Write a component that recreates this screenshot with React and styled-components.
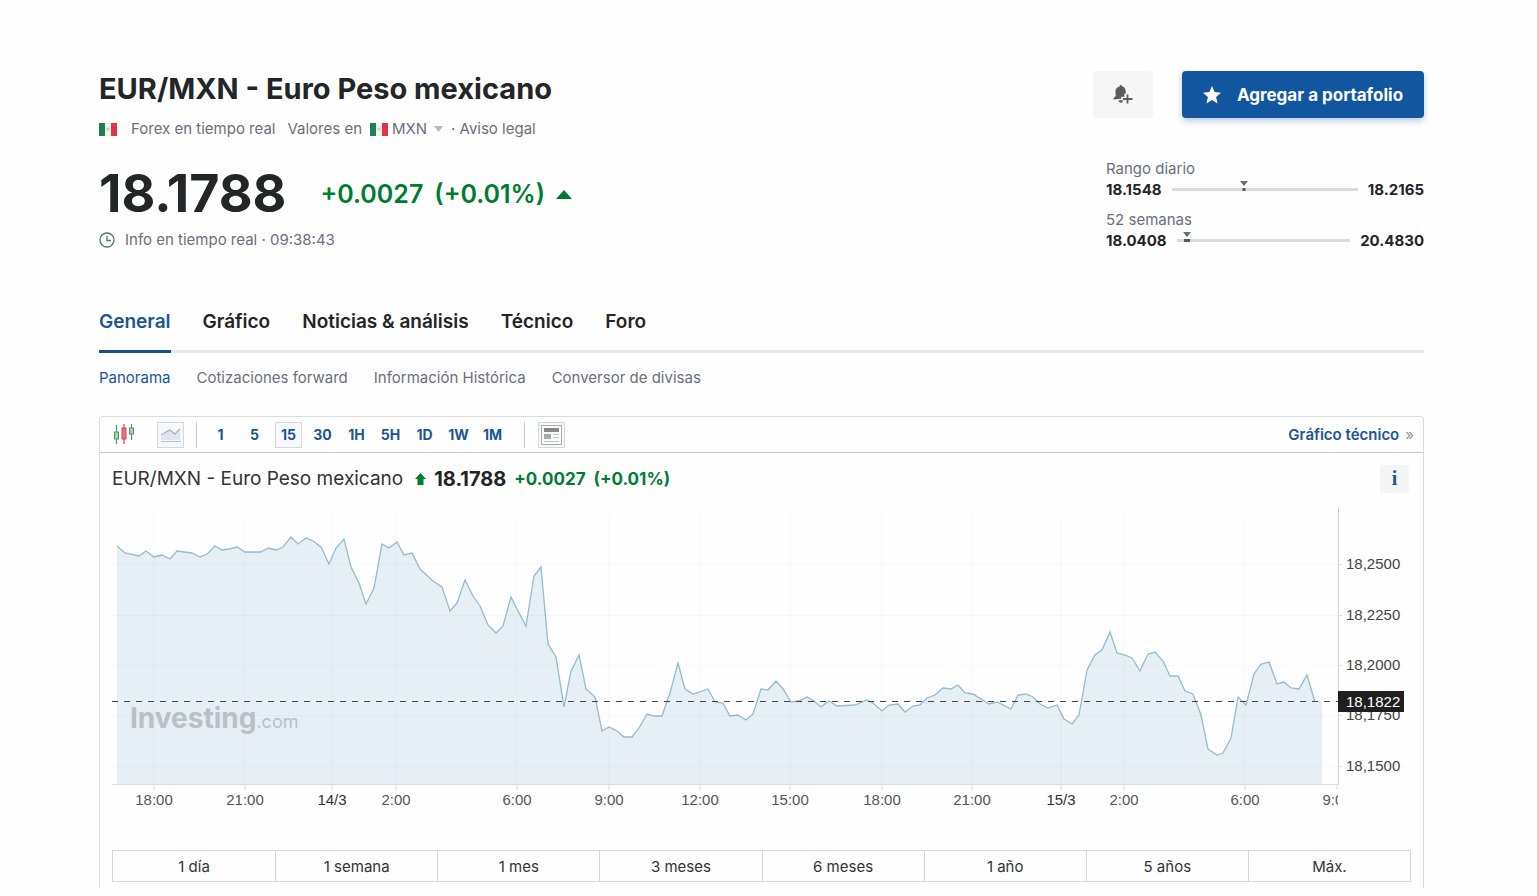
import React, { useState } from 'react';
import styled, { createGlobalStyle } from 'styled-components';

const GlobalStyle = createGlobalStyle`
  *{
    box-sizing: border-box;
  }
  body{
    margin: 0;
    background: #fefefe;
    color: #232526;
    font-family: Inter, "Liberation Sans", sans-serif;
  }
  button, select{
    font: inherit;
    color: inherit;
    border: 0;
    padding: 0;
    background: none;
    cursor: pointer;
  }
  a{
    color: inherit;
    text-decoration: none;
  }
  svg{
    display: block;
    flex: none;
  }
`;

const Page = styled.main`
  padding: 71px 113px 8px 99px;
`;

const Header = styled.header`
  display: flex;
  justify-content: space-between;
`;

const Title = styled.h1`
  margin: 0;
  font-size: 29px;
  line-height: 36px;
  font-weight: 700;
`;

const MetaRow = styled.div`
  display: flex;
  align-items: center;
  margin-top: 12px;
  font-size: 15px;
  line-height: 20px;
  color: #6a707c;
`;

const MetaText = styled.span`
  margin: 0 ${(props) => props.$right || 0}px 0 ${(props) => props.$left || 0}px;
`;

const Currency = styled.label`
  display: flex;
  align-items: center;

  select{
    appearance: none;
    margin: 0 6px 0 4px;
    line-height: 20px;
  }
`;

const PriceRow = styled.div`
  display: flex;
  align-items: center;
  margin-top: 27px;
  color: #007c32;
`;

const Price = styled.span`
  margin-right: 34px;
  color: #232526;
  font-size: 52px;
  line-height: 56px;
  font-weight: 700;
`;

const Change = styled.span`
  margin-right: 11px;
  font-size: 25px;
  line-height: 32px;
  font-weight: 600;
`;

const InfoRow = styled.div`
  display: flex;
  align-items: center;
  gap: 10px;
  margin-top: 8px;
  font-size: 15px;
  line-height: 20px;
  color: #6a707c;
`;

const Side = styled.div`
  display: flex;
  flex-direction: column;
  align-items: flex-end;
`;

const Actions = styled.div`
  display: flex;
  gap: 29px;
`;

const AlertButton = styled.button`
  display: flex;
  align-items: center;
  justify-content: center;
  width: 60px;
  height: 47px;
  border-radius: 4px;
  background: #f6f6f6;
`;

const PortfolioButton = styled.button`
  display: flex;
  align-items: center;
  justify-content: center;
  gap: 16px;
  width: 242px;
  height: 47px;
  border-radius: 4px;
  background: #1256a0;
  box-shadow: 0 3px 6px rgba(18, 86, 160, 0.3);
  color: #fff;
  font-size: 17px;
  font-weight: 700;
`;

const Ranges = styled.div`
  display: grid;
  gap: 9px;
  width: 318px;
  margin-top: 40px;
  font-size: 15px;
  line-height: 21px;
  color: #6a707c;
`;

const RangeRow = styled.div`
  display: flex;
  align-items: center;
  gap: 10px;
  color: #232526;
  font-weight: 700;
`;

const Track = styled.div`
  position: relative;
  flex: 1;
  height: 3px;
  background: #d9dcde;
`;

const Marker = styled.svg`
  position: absolute;
  top: -7px;
  margin-left: -4px;
`;

const Tabs = styled.nav`
  display: flex;
  gap: 32px;
  margin-top: 59px;
  box-shadow: inset 0 -3px #e6e7e8;
`;

const Tab = styled.a`
  padding-bottom: 16px;
  border-bottom: 3px solid ${(props) => (props.$active ? '#1a4f8b' : 'transparent')};
  color: ${(props) => (props.$active ? '#1c5595' : '#232526')};
  font-size: 19px;
  line-height: 24px;
  font-weight: 600;
`;

const SubTabs = styled.nav`
  display: flex;
  gap: 26px;
  margin-top: 15px;
`;

const SubTab = styled.a`
  color: ${(props) => (props.$active ? '#1c5595' : '#6a707c')};
  font-size: 15px;
  line-height: 20px;
`;

const Panel = styled.section`
  margin-top: 28px;
  padding-bottom: 6px;
  border: 1px solid #dadcdd;
  border-bottom: 0;
  border-radius: 4px 4px 0 0;
`;

const Toolbar = styled.div`
  display: flex;
  align-items: center;
  height: 36px;
  padding: 0 9px 0 13px;
  border-bottom: 1px solid #c6c8ca;
  color: #1c5595;
  font-size: 14px;
  font-weight: 700;
`;

const ToolButton = styled.button`
  display: flex;
  align-items: center;
  justify-content: center;
  width: 27px;
  height: 26px;
  border: 1px solid ${(props) => (props.$framed ? '#d5d8da' : 'transparent')};
  background: ${(props) => (props.$framed ? '#f7f8f9' : 'none')};
`;

const Divider = styled.span`
  width: 1px;
  height: 26px;
  margin: 0 ${(props) => props.$right}px 0 ${(props) => props.$left}px;
  background: #c6c8ca;
`;

const ChartTypes = styled.div`
  display: flex;
  align-items: center;
  gap: 22px;
`;

const Intervals = styled.div`
  display: flex;
  gap: 7px;
`;

const TechLink = styled.a`
  margin-left: auto;
  font-size: 15px;
  font-weight: 600;

  span{
    margin-left: 6px;
    color: #8d949b;
    font-weight: 400;
  }
`;

const ChartHead = styled.div`
  display: flex;
  align-items: center;
  height: 55px;
  padding: 0 14px 4px 12px;
`;

const ChartTitle = styled.h2`
  display: flex;
  align-items: center;
  gap: 8px;
  margin: 0;
  color: #333;
  font-size: 19px;
  line-height: 24px;
  font-weight: 400;

  svg{
    margin-left: 4px;
  }
  strong{
    color: #232526;
    font-size: 20px;
    font-weight: 700;
  }
  em{
    color: #007c32;
    font-size: 17px;
    font-style: normal;
    font-weight: 700;
  }
`;

const InfoButton = styled.button`
  width: 29px;
  height: 28px;
  margin-left: auto;
  background: #f4f5f6;
  color: #1c5595;
  font-family: "Liberation Serif", serif;
  font-size: 20px;
  font-weight: 700;
`;

const ChartBox = styled.div`
  display: flex;
  padding: 0 12px;
  font-family: "Liberation Sans", Arial, sans-serif;
  font-size: 15px;
`;

const Plot = styled.svg`
  flex: 1;
  min-width: 0;
  height: 304px;
`;

const Periods = styled.div`
  display: grid;
  grid-template-columns: repeat(8, 1fr);
  margin: 38px 12px 0;
  border: 1px solid #d5d8da;
`;

const Period = styled.button`
  height: 30px;
  color: #333;
  font-size: 15px;

  & + &{
    border-left: 1px solid #d5d8da;
  }
`;

const points = `117,546 125,553 139,556 146,551 154,557 162,555 170,559 177,551 192,553 200,557
  207,554 215,546 222,550 229,549 237,547 245,552 261,552 268,548 276,550 283,547 291,537 298,544
  306,538 313,541 321,547 329,564 336,548 344,539 351,567 359,583 366,604 374,588 382,544 389,548
  397,542 404,555 412,553 420,569 433,581 442,587 450,611 457,603 465,580 473,596 480,606 488,625
  496,633 503,626 511,597 518,611 526,626 534,576 541,567 548,644 556,657 564,707 571,671 579,655
  586,689 595,697 602,731 609,727 617,731 624,737 632,737 639,728 647,714 654,716 662,716 670,693
  678,663 685,689 693,694 708,689 715,702 723,703 730,716 738,715 746,720 753,714 761,689 768,690
  776,681 783,689 791,702 799,701 807,697 814,701 821,707 829,701 837,706 855,705 867,700 873,703
  882,711 889,705 898,704 905,712 913,706 920,705 927,698 935,695 943,688 951,689 958,685 965,693
  973,694 989,704 997,702 1011,709 1018,695 1026,694 1033,697 1040,704 1048,708 1057,705 1064,719
  1072,724 1079,715 1087,670 1095,655 1102,650 1110,632 1117,653 1125,655 1132,658 1140,671
  1148,654 1155,652 1163,661 1170,676 1178,676 1185,691 1193,694 1201,715 1208,749 1217,755
  1223,753 1231,738 1238,697 1246,705 1254,674 1261,664 1269,662 1277,684 1284,682 1291,688
  1299,689 1307,675 1315,702`;

const timeTicks = [
  [154, '18:00'], [245, '21:00'], [332, '14/3'], [396, '2:00'], [517, '6:00'], [609, '9:00'],
  [700, '12:00'], [790, '15:00'], [882, '18:00'], [972, '21:00'], [1061, '15/3'], [1124, '2:00'],
  [1245, '6:00'], [1337, '9:00'],
];

const priceTicks = [[564, '18,2500'], [615, '18,2250'], [665, '18,2000'], [715, '18,1750'], [766, '18,1500']];

const intervals = ['1', '5', '15', '30', '1H', '5H', '1D', '1W', '1M'];
const periods = ['1 día', '1 semana', '1 mes', '3 meses', '6 meses', '1 año', '5 años', 'Máx.'];
const tabs = ['General', 'Gráfico', 'Noticias & análisis', 'Técnico', 'Foro'];
const subTabs = ['Panorama', 'Cotizaciones forward', 'Información Histórica', 'Conversor de divisas'];

function Flag() {
  return (
    <svg width="18" height="13" viewBox="0 0 18 13" aria-hidden="true">
      <rect width="18" height="13" fill="#f3f1ee" />
      <rect width="6" height="13" fill="#1b8058" />
      <rect x="12" width="6" height="13" fill="#d8364a" />
      <circle cx="9" cy="6" r="1.6" fill="#d3c9b8" />
    </svg>
  );
}

function Range({ label, low, high, at, current }) {
  return (
    <div>
      <div>{label}</div>
      <RangeRow>
        <span>{low}</span>
        <Track>
          <Marker width="8" height="12" viewBox="0 0 8 12" style={{ left: at }} aria-hidden="true">
            <path d="M0 0h8L4 5z" fill="#6a6e70" />
            <rect x={4 - current / 2} y="7" width={current} height="3" fill="#55595c" />
          </Marker>
        </Track>
        <span>{high}</span>
      </RangeRow>
    </div>
  );
}

function Chart() {
  const percent = (x) => `${((x - 112) / 1226) * 100}%`;

  return (
    <ChartBox>
      <Plot role="img" aria-label="EUR/MXN">
        {/* the drawing stretches with the window, the labels don't */}
        <svg width="100%" height="277" viewBox="112 508 1226 277" preserveAspectRatio="none">
          <polygon points={`117,785 ${points} 1322,702 1322,785`} fill="#e6eff5" />
          <polyline points={points} fill="none" stroke="#95bccb" strokeWidth="1.3" vectorEffect="non-scaling-stroke" />
        </svg>
        {priceTicks.map(([y]) => (
          <line key={y} x1="0" x2="100%" y1={y - 507.5} y2={y - 507.5} stroke="#000" strokeOpacity="0.025" />
        ))}
        {timeTicks.map(([x, label]) => (
          <g key={x}>
            <line x1={percent(x)} x2={percent(x)} y1="6" y2="277" stroke="#000" strokeOpacity="0.025" />
            <line x1={percent(x)} x2={percent(x)} y1="277" y2="282" stroke="#d9dcde" />
            <text x={percent(x)} y="297" textAnchor="middle" fill={label.includes('/') ? '#333' : '#555'}>{label}</text>
          </g>
        ))}
        <text x="18" y="220" fill="#b9c0c6" fontFamily="Inter" fontSize="28" fontWeight="700">
          Investing<tspan fontSize="18" fontWeight="400">.com</tspan>
        </text>
        <line x1="0" x2="100%" y1="193.5" y2="193.5" stroke="#444" strokeWidth="1.2" strokeDasharray="6 6" />
        <line x1="0" x2="100%" y1="276.5" y2="276.5" stroke="#d9dcde" />
      </Plot>
      <svg width="73" height="304">
        <line x1="0.5" x2="0.5" y1="0" y2="277" stroke="#cfd2d4" />
        {priceTicks.map(([y, label]) => (
          <g key={y}>
            <line x1="0" x2="4" y1={y - 507.5} y2={y - 507.5} stroke="#d9dcde" />
            <text x="8" y={y - 503} fill="#444">{label}</text>
          </g>
        ))}
        <rect y="183" width="66" height="21" fill="#1f1f1f" />
        <text x="8" y="199" fill="#fff">18,1822</text>
      </svg>
    </ChartBox>
  );
}

function App() {
  const [interval, setInterval] = useState('15');

  return (
    <Page>
      <GlobalStyle />
      <Header>
        <div>
          <Title>EUR/MXN - Euro Peso mexicano</Title>
          <MetaRow>
            <Flag />
            <MetaText $left={14} $right={12}>Forex en tiempo real</MetaText>
            <MetaText $right={8}>Valores en</MetaText>
            <Currency>
              <Flag />
              <select aria-label="Valores en" defaultValue="MXN">
                <option>MXN</option>
              </select>
              <svg width="9" height="6" viewBox="0 0 9 6" aria-hidden="true">
                <path d="M0 0h9L4.500 6z" fill="#b5b8bb" />
              </svg>
            </Currency>
            <MetaText $left={8}>· <a href="#aviso">Aviso legal</a></MetaText>
          </MetaRow>
          <PriceRow>
            <Price>18.1788</Price>
            <Change>+0.0027</Change>
            <Change>(+0.01%)</Change>
            <svg width="16" height="9" viewBox="0 0 16 9" aria-hidden="true">
              <path d="M8 0l8 9H0z" fill="#007c32" />
            </svg>
          </PriceRow>
          <InfoRow>
            <svg width="16" height="16" viewBox="0 0 16 16" fill="none" stroke="#4d7a66" strokeWidth="1.3" aria-hidden="true">
              <circle cx="8" cy="8" r="7" />
              <path d="M8 4v4.500h4" />
            </svg>
            <span>Info en tiempo real · 09:38:43</span>
          </InfoRow>
        </div>
        <Side>
          <Actions>
            <AlertButton aria-label="Crear alerta">
              <svg width="20" height="21" viewBox="0 0 20 21" aria-hidden="true">
                <path d="M6.600 1.600L8.200.8l.8 1.500c2.100.5 3.500 2.300 3.700 4.700l.2 2.600h-1.500v3.200H8.200v1.900L.6 15.400l-.1-1.200L2.700 12l-.3-4.500c-.1-2.400 1.300-4.500 4.200-5.100z" fill="#5a5d60" />
                <path d="M5.600 16.500l4-.4v2.100c-1.700 1-3.800.4-4-1.700z" fill="#5a5d60" />
                <path d="M14.500 10.500v9M10 15h9.500" stroke="#5a5d60" strokeWidth="1.800" />
              </svg>
            </AlertButton>
            <PortfolioButton>
              <svg width="18" height="18" viewBox="0 0 18 18" aria-hidden="true">
                <path d="M9 0l2.600 6.100 6.400.6-4.900 4.300 1.500 6.500L9 14.100l-5.600 3.400L4.900 11 0 6.700l6.400-.6z" fill="#fff" />
              </svg>
              Agregar a portafolio
            </PortfolioButton>
          </Actions>
          <Ranges>
            <Range label="Rango diario" low="18.1548" high="18.2165" at="39%" current={3} />
            <Range label="52 semanas" low="18.0408" high="20.4830" at="6%" current={6} />
          </Ranges>
        </Side>
      </Header>

      <Tabs>
        {tabs.map((tab, i) => (
          <Tab key={tab} href="#" $active={i === 0}>{tab}</Tab>
        ))}
      </Tabs>
      <SubTabs>
        {subTabs.map((tab, i) => (
          <SubTab key={tab} href="#" $active={i === 0}>{tab}</SubTab>
        ))}
      </SubTabs>

      <Panel>
        <Toolbar>
          <ChartTypes>
            <svg width="22" height="21" viewBox="0 0 22 21" aria-hidden="true">
              <path d="M3.500 1v19M18.500 0v16" stroke="#4f9a63" strokeWidth="1.200" />
              <path d="M11 0v20" stroke="#c9494f" strokeWidth="1.200" />
              <rect x="1.500" y="8" width="4" height="7" fill="#a9d3b2" stroke="#4f9a63" />
              <rect x="9" y="4" width="4" height="11" fill="#e8787c" stroke="#c9494f" />
              <rect x="16.500" y="4" width="4" height="6" fill="#a9d3b2" stroke="#4f9a63" />
            </svg>
            <ToolButton $framed aria-label="Gráfico de área">
              <svg width="22" height="16" viewBox="0 0 22 16" aria-hidden="true">
                <path d="M1 9l4-3 5-3 5 4 5-4v10H1z" fill="#dfe5f0" />
                <path d="M1 8l5-3 4-2 5 4 5-5" fill="none" stroke="#a3b2c2" strokeWidth="1.300" />
                <path d="M1 14.500h20" stroke="#b9c0ca" />
              </svg>
            </ToolButton>
          </ChartTypes>
          <Divider $left={12} $right={10} />
          <Intervals>
            {intervals.map((item) => (
              <ToolButton key={item} $framed={item === interval} onClick={() => setInterval(item)}>{item}</ToolButton>
            ))}
          </Intervals>
          <Divider $left={18} $right={13} />
          <ToolButton $framed aria-label="Noticias">
            <svg width="21" height="20" viewBox="0 0 21 20" aria-hidden="true">
              <rect x="0.500" y="0.500" width="20" height="19" fill="#fafafa" stroke="#a8abad" />
              <path d="M3 5h15" stroke="#85888a" strokeWidth="4" />
              <rect x="3" y="9" width="7" height="5" fill="#a8abad" />
              <path d="M12 9.500h6M12 12.500h6M3 16.500h15" stroke="#c0c3c5" />
            </svg>
          </ToolButton>
          <TechLink href="#">Gráfico técnico<span>»</span></TechLink>
        </Toolbar>
        <ChartHead>
          <ChartTitle>
            EUR/MXN - Euro Peso mexicano
            <svg width="11" height="12" viewBox="0 0 11 12" aria-hidden="true">
              <path d="M5.500 0L11 6H8.500v6h-6V6H0z" fill="#007c32" />
            </svg>
            <strong>18.1788</strong>
            <em>+0.0027</em>
            <em>(+0.01%)</em>
          </ChartTitle>
          <InfoButton aria-label="Información">i</InfoButton>
        </ChartHead>
        <Chart />
        <Periods>
          {periods.map((item) => (
            <Period key={item}>{item}</Period>
          ))}
        </Periods>
      </Panel>
    </Page>
  );
}

export default App;
